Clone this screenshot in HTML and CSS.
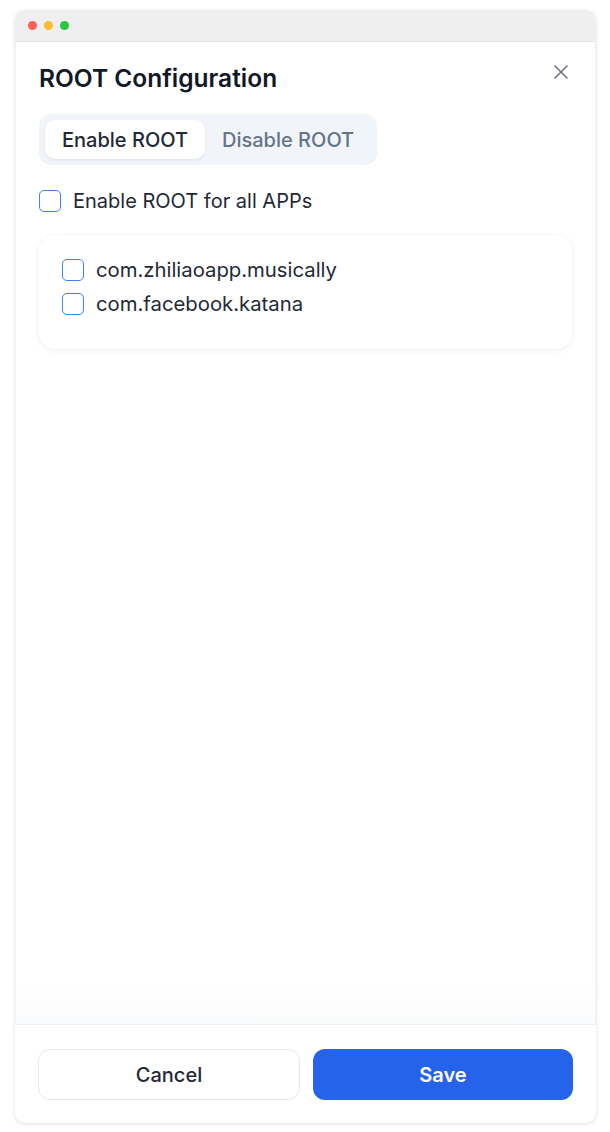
FILE: index.html
```html
<!DOCTYPE html>
<html lang="en">
<head>
    <meta charset="UTF-8">
    <meta name="viewport" content="width=device-width, initial-scale=1.0">
    <title>ROOT Configuration</title>
    <link rel="stylesheet" href="styles.css">
</head>
<body>

    <div class="window">
        <!-- Title bar -->
        <div class="titlebar">
            <span class="dot red"></span>
            <span class="dot yellow"></span>
            <span class="dot green"></span>
        </div>

        <!-- Content -->
        <div class="content">
            <div class="header">
                <h1>ROOT Configuration</h1>
                <button class="close-btn" aria-label="Close">
                    <svg width="14" height="14" viewBox="0 0 14 14">
                        <path d="M1 1L13 13M13 1L1 13" stroke="#6b7280" stroke-width="1.6" stroke-linecap="round"/>
                    </svg>
                </button>
            </div>

            <div class="segmented">
                <button class="seg active">Enable ROOT</button>
                <button class="seg">Disable ROOT</button>
            </div>

            <label class="check-row all-apps">
                <span class="box"></span>
                Enable ROOT for all APPs
            </label>

            <div class="app-list">
                <label class="check-row">
                    <span class="box"></span>
                    com.zhiliaoapp.musically
                </label>
                <label class="check-row">
                    <span class="box"></span>
                    com.facebook.katana
                </label>
            </div>
        </div>

        <!-- Footer -->
        <div class="footer">
            <button class="btn cancel">Cancel</button>
            <button class="btn save">Save</button>
        </div>
    </div>

</body>
</html>
```

FILE: styles.css
```css
body {
    margin: 0;
    padding: 10px 14px 9px 15px;
    background-color: #ffffff;
    font-family: Inter, "Noto Sans", sans-serif;
    color: #1f2937;
}

.window {
    height: 1113px;
    display: flex;
    flex-direction: column;
    background-color: #ffffff;
    border-radius: 10px;
    box-shadow: 0 1px 4px rgba(0, 0, 0, 0.12);
    overflow: hidden;
}

.titlebar {
    height: 32px;
    flex-shrink: 0;
    background-color: #efefef;
    border-bottom: 1px solid #e3e6ea;
    display: flex;
    align-items: center;
    gap: 7px;
    padding-left: 13px;
    box-sizing: border-box;
}

.dot {
    width: 9px;
    height: 9px;
    border-radius: 50%;
}

.red { background-color: #fe5f57; }
.yellow { background-color: #febc2e; }
.green { background-color: #28c840; }

.content {
    flex: 1;
    padding: 20px 23px 0 23px;
    border-left: 1px solid #eef2f7;
    border-right: 1px solid #eef2f7;
    background: linear-gradient(to bottom, #ffffff 96%, #fafbfc 100%);
}

.header {
    display: flex;
    justify-content: space-between;
    align-items: center;
}

h1 {
    margin: 0;
    font-size: 24.5px;
    font-weight: 600;
    color: #111827;
    line-height: 32px;
}

.close-btn {
    background: none;
    border: none;
    padding: 0;
    margin-right: 4px;
    margin-top: -13px;
    cursor: pointer;
    display: flex;
}

.segmented {
    display: inline-flex;
    margin-top: 20px;
    padding: 6px;
    background-color: #f1f5f9;
    border-radius: 12px;
}

.seg {
    font-family: inherit;
    font-size: 20px;
    font-weight: 500;
    color: #64748b;
    background: none;
    border: none;
    padding: 0 17px;
    height: 39px;
    border-radius: 10px;
    cursor: pointer;
}

.seg.active {
    background-color: #ffffff;
    color: #1f2937;
    box-shadow: 0 1px 3px rgba(0, 0, 0, 0.08);
}

.check-row {
    display: flex;
    align-items: center;
    gap: 12px;
    font-size: 20px;
    color: #1f2937;
    line-height: 24px;
    cursor: pointer;
}

.app-list .check-row {
    font-size: 20.3px;
}

.all-apps {
    margin-top: 24px;
}

.box {
    width: 20px;
    height: 20px;
    border: 1.5px solid #3b82f6;
    border-radius: 5px;
    background-color: #ffffff;
}

.app-list {
    margin-top: 22px;
    padding: 23px 23px 33px 23px;
    border-radius: 16px;
    background-color: #ffffff;
    box-shadow: 0 1px 6px rgba(0, 0, 0, 0.07);
    display: flex;
    flex-direction: column;
    gap: 10px;
}

.footer {
    flex-shrink: 0;
    display: flex;
    gap: 13px;
    padding: 24px 23px 23px 23px;
    border-top: 1px solid #eef2f7;
}

.btn {
    flex: 1;
    height: 51px;
    font-family: inherit;
    font-size: 20px;
    border-radius: 12px;
    cursor: pointer;
}

.cancel {
    background-color: #ffffff;
    border: 1px solid #e2e8f0;
    color: #1f2937;
    font-weight: 500;
}

.save {
    background-color: #2563eb;
    border: none;
    color: #ffffff;
    font-weight: 600;
}
```
